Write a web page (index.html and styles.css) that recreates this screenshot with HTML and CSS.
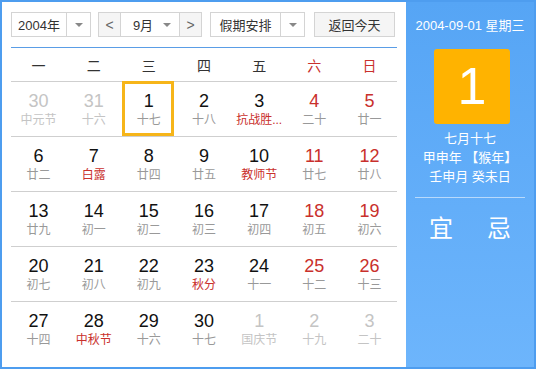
FILE: index.html
```html
<!DOCTYPE html>
<html lang="zh-CN">
<head>
  <meta charset="UTF-8">
  <meta name="viewport" content="width=device-width, initial-scale=1.0">
  <title>万年历</title>
  <link rel="stylesheet" href="styles.css">
</head>
<body>
  <div class="calendar">
    <div class="main">
      <div class="toolbar">
        <div class="select year">
          <span class="sel-text">2004年</span>
          <span class="sel-arrow"><i class="caret"></i></span>
        </div>
        <div class="select month">
          <span class="nav">&lt;</span>
          <span class="sel-text">9月</span>
          <span class="sel-arrow plain"><i class="caret"></i></span>
          <span class="nav right">&gt;</span>
        </div>
        <div class="select holiday">
          <span class="sel-text">假期安排</span>
          <span class="sel-arrow"><i class="caret"></i></span>
        </div>
        <button class="today">返回今天</button>
      </div>

      <div class="week">
        <span>一</span><span>二</span><span>三</span><span>四</span><span>五</span>
        <span class="red">六</span><span class="red">日</span>
      </div>

      <div class="days">
        <div class="day other"><b>30</b><small>中元节</small></div>
        <div class="day other"><b>31</b><small>十六</small></div>
        <div class="day current"><b>1</b><small>十七</small></div>
        <div class="day"><b>2</b><small>十八</small></div>
        <div class="day"><b>3</b><small class="fest">抗战胜...</small></div>
        <div class="day weekend"><b>4</b><small>二十</small></div>
        <div class="day weekend"><b>5</b><small>廿一</small></div>

        <div class="day"><b>6</b><small>廿二</small></div>
        <div class="day"><b>7</b><small class="fest">白露</small></div>
        <div class="day"><b>8</b><small>廿四</small></div>
        <div class="day"><b>9</b><small>廿五</small></div>
        <div class="day"><b>10</b><small class="fest">教师节</small></div>
        <div class="day weekend"><b>11</b><small>廿七</small></div>
        <div class="day weekend"><b>12</b><small>廿八</small></div>

        <div class="day"><b>13</b><small>廿九</small></div>
        <div class="day"><b>14</b><small>初一</small></div>
        <div class="day"><b>15</b><small>初二</small></div>
        <div class="day"><b>16</b><small>初三</small></div>
        <div class="day"><b>17</b><small>初四</small></div>
        <div class="day weekend"><b>18</b><small>初五</small></div>
        <div class="day weekend"><b>19</b><small>初六</small></div>

        <div class="day"><b>20</b><small>初七</small></div>
        <div class="day"><b>21</b><small>初八</small></div>
        <div class="day"><b>22</b><small>初九</small></div>
        <div class="day"><b>23</b><small class="fest">秋分</small></div>
        <div class="day"><b>24</b><small>十一</small></div>
        <div class="day weekend"><b>25</b><small>十二</small></div>
        <div class="day weekend"><b>26</b><small>十三</small></div>

        <div class="day"><b>27</b><small>十四</small></div>
        <div class="day"><b>28</b><small class="fest">中秋节</small></div>
        <div class="day"><b>29</b><small>十六</small></div>
        <div class="day"><b>30</b><small>十七</small></div>
        <div class="day other"><b>1</b><small>国庆节</small></div>
        <div class="day other"><b>2</b><small>十九</small></div>
        <div class="day other"><b>3</b><small>二十</small></div>
      </div>
    </div>

    <div class="side">
      <div class="side-date">2004-09-01 星期三</div>
      <div class="big-day">1</div>
      <div class="lunar">
        <p>七月十七</p>
        <p>甲申年 【猴年】</p>
        <p>壬申月 癸未日</p>
      </div>
      <div class="yiji">
        <span>宜</span><span>忌</span>
      </div>
    </div>
  </div>
</body>
</html>
```

FILE: styles.css
```css
* {
  box-sizing: border-box;
}
body {
  margin: 0;
  font-family: "Liberation Sans", "Noto Sans CJK SC", sans-serif;
  color: #333;
}
.calendar {
  width: 536px;
  height: 369px;
  display: flex;
  border: 2px solid #4e9def;
  background: #fff;
}
.main {
  width: 404px;
  padding: 10px 9px 0;
}
.toolbar {
  display: flex;
  gap: 7px;
  height: 25px;
  font-size: 13px;
}
.select {
  display: flex;
  border: 1px solid #d4d4d4;
  background: #fff;
}
.sel-text {
  display: flex;
  align-items: center;
  justify-content: center;
  flex: 1;
}
.sel-arrow {
  width: 24px;
  display: flex;
  align-items: center;
  justify-content: center;
  border-left: 1px solid #d4d4d4;
}
.sel-arrow.plain {
  border-left: none;
}
.caret {
  width: 0;
  height: 0;
  border-left: 4px solid transparent;
  border-right: 4px solid transparent;
  border-top: 4px solid #888;
}
.year {
  width: 80px;
}
.month {
  width: 104px;
  margin-right: 1px;
}
.month .sel-text {
  padding-left: 10px;
}
.nav {
  width: 22px;
  display: flex;
  align-items: center;
  justify-content: center;
  background: #f5f5f5;
  border-right: 1px solid #d4d4d4;
  color: #666;
  font-size: 14px;
}
.nav.right {
  border-right: none;
  border-left: 1px solid #d4d4d4;
}
.holiday {
  width: 95px;
  margin-right: 2px;
}
.today {
  width: 81px;
  height: 25px;
  border: 1px solid #d4d4d4;
  background: #f5f5f5;
  font-family: inherit;
  font-size: 13px;
  color: #333;
  padding: 0;
}
.week {
  margin-top: 10px;
  border-top: 1px solid #5a9de6;
  display: grid;
  grid-template-columns: repeat(7, 1fr);
  height: 34px;
  align-items: center;
  text-align: center;
  font-size: 14px;
}
.red {
  color: #c9302c;
}
.days {
  display: grid;
  grid-template-columns: repeat(7, 1fr);
  grid-auto-rows: 55px;
}
.day {
  position: relative;
  border-top: 1px solid #cfcfcf;
  text-align: center;
  padding-top: 8px;
}
.day b {
  display: block;
  font-weight: normal;
  font-size: 18px;
  line-height: 22px;
  color: #111;
}
.day small {
  display: block;
  font-size: 12px;
  line-height: 16px;
  color: #999;
}
.day small.fest {
  color: #c9302c;
}
.day.weekend b {
  color: #c9302c;
}
.day.other b,
.day.other small {
  color: #c4c4c4;
}
.day.current::after {
  content: "";
  position: absolute;
  top: -1px;
  bottom: 0;
  left: 1px;
  right: 2px;
  border: 3px solid #f6b519;
}
.side {
  flex: 1;
  background: linear-gradient(#56a5f5, #6db5fc);
  color: #fff;
  display: flex;
  flex-direction: column;
  align-items: center;
  padding-top: 15px;
}
.side-date {
  font-size: 13px;
  line-height: 18px;
}
.big-day {
  margin-top: 14px;
  margin-left: 4px;
  width: 76px;
  height: 75px;
  background: #ffb300;
  border-radius: 3px;
  font-size: 52px;
  line-height: 75px;
  text-align: center;
}
.lunar {
  margin-top: 5px;
  text-align: center;
  font-size: 13px;
  line-height: 19px;
}
.lunar p {
  margin: 0;
}
.yiji {
  margin-top: 11px;
  width: 110px;
  border-top: 1px solid rgba(255, 255, 255, 0.55);
  display: flex;
  justify-content: center;
  gap: 34px;
  font-size: 24px;
  padding-top: 11px;
}
```
